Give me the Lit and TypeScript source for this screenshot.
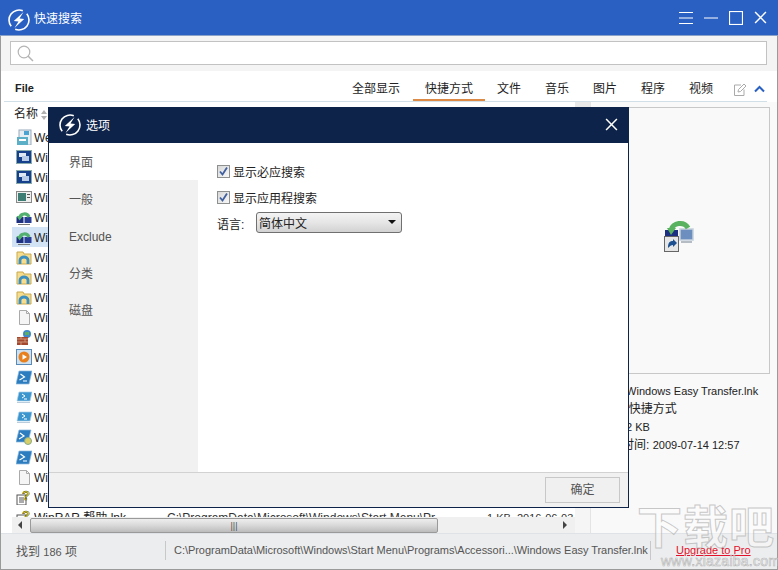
import { LitElement, html, css, svg } from 'lit';
import { customElement } from 'lit/decorators.js';

const bolt = () => html`
  <svg class="logo" width="22" height="22" viewBox="0 0 22 22" fill="none">
    <path d="M14.800 1.800A10 10 0 0 0 3.200 17.300M7.200 20.200A10 10 0 0 0 18.800 4.700" stroke="#fff" stroke-width="1.600"/>
    <path d="M15.500 3 5.800 12 10.500 12.400 6.500 19 16.200 10 11.500 9.600z" fill="#fff"/>
  </svg>`;

const icons: Record<string, unknown> = {
  web: svg`<rect x="3" y="1" width="12" height="15" fill="#e4eef3" stroke="#9ab"/><rect x="1" y="8" width="11" height="8" fill="#5bb0c8"/><rect x="3" y="10" width="7" height="2" fill="#fff"/><rect x="8" y="2" width="5" height="4" fill="#4aa3d0"/>`,
  win: svg`<rect x="0.5" y="1.500" width="15" height="13" fill="#17408c" stroke="#8aa"/><rect x="3" y="4" width="7" height="4" fill="#dfe8f5"/><rect x="6" y="7" width="7" height="5" fill="#b8cbe6"/>`,
  pane: svg`<rect x="0.5" y="2.500" width="15" height="11" fill="#eee" stroke="#888"/><rect x="2" y="4" width="8" height="8" fill="#3e7d74"/><rect x="11" y="5" width="3" height="1" fill="#555"/><rect x="11" y="8" width="3" height="1" fill="#555"/>`,
  net: svg`<rect x="0.5" y="8" width="7" height="6" fill="#1c2f80"/><rect x="8.500" y="8" width="7" height="6" fill="#2a3f96"/><rect x="2" y="15" width="12" height="1" fill="#777"/><path d="M3.500 9A5 5 0 0 1 13 8" fill="none" stroke="#52b070" stroke-width="3.200"/><path d="M0.500 7 7 7 3.500 11.500z" fill="#52b070"/>`,
  folder: svg`<path d="M1 3h6l1 2h7v10H1z" fill="#f6dc8c" stroke="#c9a94e"/><path d="M4 15V11a4 3 0 0 1 8 0v4" fill="none" stroke="#3d8fc0" stroke-width="2.800"/>`,
  doc: svg`<path d="M3.500 1.500h7l3 3v11h-10z" fill="#f5f5f5" stroke="#aaa"/><path d="M10.500 1.500v3h3" fill="none" stroke="#aaa"/>`,
  fire: svg`<circle cx="11" cy="5" r="4" fill="#3f88c9"/><path d="M9 3h4v3H9z" fill="#5fae5a"/><path d="M1 8h11v8H1z" fill="#a4492f"/><path d="M1 10h11M1 13h11M5 8v2M9 10v3M5 13v3" stroke="#d9a58c" stroke-width=".8"/>`,
  play: svg`<rect x="0.500" y="0.500" width="15" height="15" fill="#cfe0ef" stroke="#5a8bb8"/><circle cx="8" cy="8" r="5.500" fill="#e8801e"/><path d="M6.500 5.200 11 8l-4.500 2.800z" fill="#fff"/>`,
  ps: svg`<path d="M3 2h13l-3 13H0z" fill="#2c7cc0" stroke="#8db9dc" stroke-width=".7"/><path d="M4.500 5 8.500 8 3.500 11M7 12h4" fill="none" stroke="#fff" stroke-width="1.200"/>`,
  pssm: svg`<path d="M3 3h13l-2 9H1z" fill="#3b95ce" stroke="#a8cde6" stroke-width=".7"/><path d="M6 5l3 2-3 2M8 10h3" fill="none" stroke="#fff"/><path d="M1 13h13v1H1z" fill="#bcd"/>`,
  psg: svg`<path d="M3 1h12l-3 12H0z" fill="#2c7cc0" stroke="#8db9dc" stroke-width=".7"/><path d="M4 4l4 3-5 3" fill="none" stroke="#fff" stroke-width="1.200"/><circle cx="12" cy="12" r="3.500" fill="#d8cf68" stroke="#8a8"/>`,
  help: svg`<rect x="1" y="6" width="9" height="10" fill="#fff" stroke="#555"/><path d="M3 9h5M3 11h5M3 13h5" stroke="#555"/><text x="6" y="11" font-family="Liberation Sans" font-weight="700" font-size="13" fill="#f4e23a" stroke="#4b4500" stroke-width=".5">?</text>`,
};

const rows = [
  ['web', 'Welcome Center.lnk'], ['win', 'Windows Explorer.lnk'], ['win', 'Windows Defender.lnk'],
  ['pane', 'Windows DVD Maker.lnk'], ['net', 'Windows Easy Transfer Reports.lnk'], ['net', 'Windows Easy Transfer.lnk'],
  ['folder', 'Windows Fax and Scan.lnk'], ['folder', 'Windows Gadget.lnk'], ['folder', 'Windows Journal.lnk'],
  ['doc', 'Windows Live.lnk'], ['fire', 'Windows Firewall.lnk'], ['play', 'Windows Media Player.lnk'],
  ['ps', 'Windows PowerShell.lnk'], ['pssm', 'Windows PowerShell ISE.lnk'], ['pssm', 'Windows PowerShell ISE (x86).lnk'],
  ['psg', 'Windows PowerShell Modules.lnk'], ['ps', 'Windows PowerShell (x86).lnk'], ['doc', 'Windows Update.lnk'],
  ['help', 'WinRAR.lnk'], ['help', 'WinRAR 帮助.lnk'],
];

@customElement('app-root')
export class AppRoot extends LitElement {
  static styles = css`
    :host {
      display: block;
      width: 778px;
      height: 570px;
      position: relative;
      overflow: hidden;
      font-family: "Liberation Sans", "Noto Sans CJK SC", sans-serif;
      font-size: 12px;
      color: #222;
      background: #fff;
    }
    .window {
      height: 570px;
      box-sizing: border-box;
      border: 1px solid #9a9a9a;
      border-top: none;
      display: flex;
      flex-direction: column;
    }
    .titlebar {
      height: 36px;
      flex: none;
      margin: 0 -1px;
      background: #2a60c2;
      border-bottom: 1px solid #8aa2c8;
      box-sizing: border-box;
      display: flex;
      align-items: center;
      padding: 0 11px 0 8px;
      color: #fff;
    }
    .titlebar .logo { margin-top: 4px; flex: none; }
    .titlebar .name { margin-left: 4px; flex: 1; }
    .winbtns { display: flex; gap: 11px; align-items: center; }
    .searchbar {
      height: 35px;
      flex: none;
      background: #f4f4f4;
      box-sizing: border-box;
      padding: 5px 10px 6px 9px;
    }
    .searchbox {
      height: 24px;
      background: #fff;
      border: 1px solid #c2c2c2;
      box-sizing: border-box;
      padding: 3px 6px;
    }
    .tabs {
      height: 31px;
      flex: none;
      margin: 0 10px 0 3px;
      border-bottom: 1px solid #d0dfe8;
      box-sizing: border-box;
      display: flex;
      align-items: center;
      padding-left: 11px;
    }
    .file { font-weight: 700; font-size: 11px; flex: 1; margin-top: 3px; }
    .tab { width: 72px; height: 30px; line-height: 37px; text-align: center; box-sizing: border-box; flex: none; }
    .tab.first { width: 74px; }
    .tab.small { width: 48px; }
    .tab.on { border-bottom: 2px solid #dc8a45; }
    .tabend { display: flex; align-items: center; gap: 7px; margin: 6px 2px 0 9px; }
    .main { flex: 1; display: flex; min-height: 0; }
    .list { width: 589px; flex: none; display: flex; padding-left: 3px; box-sizing: border-box; }
    .listmain { flex: 1; min-width: 0; display: flex; flex-direction: column; }
    .vscroll { width: 15px; flex: none; background: #f5f5f5; }
    .vscroll div { height: 16px; background: #e9e9e9; }
    .rows { flex: 1; overflow: hidden; }
    .head { height: 25px; line-height: 27px; padding-left: 10px; display: flex; align-items: center; gap: 3px; }
    .head svg { margin-top: 1px; }
    .row {
      height: 20px;
      display: flex;
      align-items: center;
      padding-left: 12px;
      white-space: nowrap;
    }
    .row.sel { background: #d3e3f6; margin-left: 8px; padding-left: 4px; }
    .row svg { flex: none; margin-right: 2px; }
    .row span { line-height: 22px; height: 20px; flex: none; overflow: hidden; }
    .row .n { width: 133px; }
    .row .p { width: 320px; color: #333; }
    .row .s { width: 30px; color: #333; font-size: 11px; }
    .row .d { width: 58px; color: #333; font-size: 11px; }
    .hscroll {
      height: 16px;
      flex: none;
      margin-left: 8px;
      background: #f0f0f0;
      display: flex;
      align-items: center;
    }
    .arrow { width: 0; height: 0; border: 4px solid transparent; flex: none; }
    .arrow.l { border-right-color: #444; margin-left: 2px; }
    .arrow.r { border-left-color: #444; margin-left: 125px; }
    .thumb {
      width: 408px;
      height: 15px;
      margin-left: 8px;
      flex: none;
      box-sizing: border-box;
      border: 1px solid #9a9a9a;
      border-radius: 2px;
      background: linear-gradient(#eee, #d8d8d8 50%, #bcbcbc);
      text-align: center;
      font-size: 9px;
      line-height: 14px;
      color: #555;
    }
    .preview { flex: 1; background: #f9f9f9; border-left: 1px solid #e4e4e4; padding-left: 9px; box-sizing: border-box; min-width: 0; }
    .shot {
      height: 267px;
      margin: 5px 7px 0 0;
      border: 1px solid #c8c8c8;
      box-sizing: border-box;
      display: flex;
      justify-content: flex-end;
      padding: 112px 74px 0 0;
    }
    .facts { margin-top: 8px; line-height: 18px; white-space: nowrap; font-size: 11px; margin-left: -2px; }
    .facts .cj { font-size: 12px; }
    .facts .num { font-size: 11px; }
    .status {
      height: 36px;
      flex: none;
      background: #ecedee;
      border-top: 1px solid #dfe3e8;
      box-sizing: border-box;
      display: flex;
      align-items: center;
      color: #555;
      padding: 0 0 2px 15px;
      white-space: nowrap;
    }
    .found { width: 149px; flex: none; }
    .found b { font-weight: 400; font-size: 11px; }
    .path { border-left: 1px solid #c8c8c8; height: 19px; line-height: 19px; padding-left: 8px; width: 476px; flex: none; font-size: 11px; letter-spacing: -0.04px; }
    .pro { border-left: 1px solid #c8c8c8; height: 19px; line-height: 19px; padding-left: 25px; color: #e3122a; text-decoration: underline; font-size: 11px; }

    .modal {
      position: absolute;
      left: 48px;
      top: 107px;
      width: 581px;
      height: 401px;
      box-sizing: border-box;
      border: 1px solid #0e2349;
      border-top: none;
      background: #fff;
      display: flex;
      flex-direction: column;
    }
    .mhead {
      height: 36px;
      flex: none;
      margin: 0 -1px;
      background: #0e2349;
      display: flex;
      align-items: center;
      padding: 0 11px 1px 11px;
      box-sizing: border-box;
      color: #fff;
    }
    .mhead .name { margin-left: 5px; flex: 1; }
    .mbody { flex: 1; display: flex; min-height: 0; }
    .side { width: 149px; flex: none; background: #f1f1f1; display: flex; flex-direction: column; }
    .side div { height: 37px; line-height: 41px; padding-left: 20px; color: #555; flex: none; }
    .side div.on { background: #fff; }
    .pane { flex: 1; padding: 15px 0 0 19px; }
    .check { display: flex; align-items: center; gap: 3px; height: 26px; }
    .box {
      width: 13px;
      height: 13px;
      box-sizing: border-box;
      border: 1px solid #8e8f8f;
      background: linear-gradient(135deg, #d8d8d8, #f7f7f7);
      display: block;
    }
    .box svg { display: block; }
    .lang { display: flex; align-items: center; height: 26px; margin-top: -1px; }
    .lang label { width: 39px; flex: none; margin-top: 3px; }
    .select {
      width: 146px;
      height: 21px;
      box-sizing: border-box;
      border: 1px solid #707070;
      border-radius: 3px;
      background: linear-gradient(#f4f4f4, #e6e6e6 50%, #d2d2d2);
      display: flex;
      align-items: center;
      justify-content: space-between;
      padding: 0 5px 0 2px;
    }
    .caret { width: 0; height: 0; border: 4px solid transparent; border-top-color: #111; border-bottom: none; }
    .mfoot {
      height: 35px;
      flex: none;
      box-sizing: border-box;
      border-top: 1px solid #d2d2d2;
      background: #f1f1f1;
      display: flex;
      justify-content: flex-end;
      align-items: center;
      padding-right: 8px;
    }
    .ok {
      width: 75px;
      height: 26px;
      box-sizing: border-box;
      border: 1px solid #c8c8c8;
      background: #f0f0f0;
      color: #555;
      text-align: center;
      line-height: 24px;
    }
    .mark {
      position: absolute;
      left: 637px;
      top: 503px;
      color: rgba(255, 255, 255, 0.45);
      -webkit-text-stroke: 1px rgba(165, 165, 165, 0.6);
      font-size: 45px;
      line-height: 52px;
      letter-spacing: 1px;
      font-weight: 700;
      white-space: nowrap;
      pointer-events: none;
    }
    .markurl {
      position: absolute;
      left: 661px;
      top: 554px;
      font-size: 14px;
      line-height: 14px;
      letter-spacing: .25px;
      color: rgba(255, 255, 255, 0.6);
      -webkit-text-stroke: .6px rgba(165, 165, 165, 0.8);
      white-space: nowrap;
      pointer-events: none;
    }
  `;

  private icon(name: string) {
    return html`<svg width="16" height="16" viewBox="0 0 16 16">${icons[name]}</svg>`;
  }

  private closeIcon() {
    return html`<svg width="13" height="13" viewBox="0 0 12 12"><path d="M1 1l10 10M11 1 1 11" stroke="#fff" stroke-width="1.400"/></svg>`;
  }

  private tick() {
    return html`<svg width="11" height="11" viewBox="0 0 11 11"><path d="M2 5.500l2.500 3L9 1.500" fill="none" stroke="#3f5f9e" stroke-width="1.800"/></svg>`;
  }

  render() {
    return html`
      <div class="window">
        <div class="titlebar">
          ${bolt()}
          <span class="name">快速搜索</span>
          <div class="winbtns">
            <svg width="14" height="14" viewBox="0 0 14 14"><path d="M0 1.500h14M0 7h14M0 12.500h14" stroke="#fff"/></svg>
            <svg width="14" height="14" viewBox="0 0 14 14"><path d="M0 7h14" stroke="#fff"/></svg>
            <svg width="14" height="14" viewBox="0 0 14 14"><rect x=".5" y=".5" width="13" height="13" fill="none" stroke="#fff" stroke-width="1.200"/></svg>
            ${this.closeIcon()}
          </div>
        </div>
        <div class="searchbar">
          <div class="searchbox">
            <svg width="17" height="17" viewBox="0 0 17 17" fill="none" stroke="#b4b4b4"><circle cx="7" cy="7" r="5.800" stroke-width="1.200"/><path d="M11 11l5 5" stroke-width="1.500"/></svg>
          </div>
        </div>
        <div class="tabs">
          <span class="file">File</span>
          <span class="tab first">全部显示</span>
          <span class="tab on">快捷方式</span>
          <span class="tab small">文件</span>
          <span class="tab small">音乐</span>
          <span class="tab small">图片</span>
          <span class="tab small">程序</span>
          <span class="tab small">视频</span>
          <span class="tabend">
            <svg width="13" height="13" viewBox="0 0 13 13" fill="none" stroke="#aaa"><path d="M10 6.500v6H.5V2H7"/><path d="M4 9l.5-2.500L10 1l2 2-5.500 5.500z"/></svg>
            <svg width="11" height="8" viewBox="0 0 11 8" fill="none" stroke="#2a60c2" stroke-width="2"><path d="M1 6.500l4.500-4.500 4.500 4.500"/></svg>
          </span>
        </div>
        <div class="main">
          <div class="list">
            <div class="listmain">
              <div class="rows">
                <div class="head">
                  名称
                  <svg width="6" height="10" viewBox="0 0 6 10" fill="#b0b0b0"><path d="M3 0l3 4H0zM3 10 0 6h6z"/></svg>
                </div>
                ${rows.map((r, i) => html`
                  <div class="row ${i === 5 ? 'sel' : ''}">
                    ${this.icon(r[0])}
                    <span class="n">${r[1]}</span>
                    <span class="p">C:\\ProgramData\\Microsoft\\Windows\\Start Menu\\Pr</span>
                    <span class="s">1 KB</span>
                    <span class="d">2016-06-03</span>
                  </div>`)}
              </div>
              <div class="hscroll">
                <span class="arrow l"></span>
                <div class="thumb">|||</div>
                <span class="arrow r"></span>
              </div>
            </div>
            <div class="vscroll"><div></div></div>
          </div>
          <div class="preview">
            <div class="shot">
              <svg width="32" height="32" viewBox="0 0 32 32">
                <rect x="2" y="10" width="13" height="10" fill="#1c2f80"/>
                <rect x="17" y="9" width="13" height="11" fill="#6c8fc0" stroke="#c5d0dc" stroke-width="1.500"/>
                <path d="M18 22h11" stroke="#b5bcc4" stroke-width="2"/>
                <path d="M8 10A9 8 0 0 1 25 8" fill="none" stroke="#59b25f" stroke-width="5"/>
                <path d="M4 8h9l-5 7z" fill="#59b25f"/>
                <rect x="1.500" y="16.500" width="14" height="15" fill="#e6e6e6" stroke="#666"/>
                <path d="M5 28c0-6 2-7 5-7v-2l4 4-4 4v-2c-2 0-3 1-5 3z" fill="#1c4f90"/>
              </svg>
            </div>
            <div class="facts">
              <div>名称: Windows Easy Transfer.lnk</div>
              <div class="cj">类型: 快捷方式</div>
              <div>大小: 2 KB</div>
              <div class="cj">修改时间: <span class="num">2009-07-14 12:57</span></div>
            </div>
          </div>
        </div>
        <div class="status">
          <span class="found">找到 <b>186</b> 项</span>
          <span class="path">C:\\ProgramData\\Microsoft\\Windows\\Start Menu\\Programs\\Accessori...\\Windows Easy Transfer.lnk</span>
          <span class="pro">Upgrade to Pro</span>
        </div>
      </div>

      <div class="modal">
        <div class="mhead">
          ${bolt()}
          <span class="name">选项</span>
          ${this.closeIcon()}
        </div>
        <div class="mbody">
          <div class="side">
            <div class="on">界面</div>
            <div>一般</div>
            <div>Exclude</div>
            <div>分类</div>
            <div>磁盘</div>
          </div>
          <div class="pane">
            <div class="check"><span class="box">${this.tick()}</span>显示必应搜索</div>
            <div class="check"><span class="box">${this.tick()}</span>显示应用程搜索</div>
            <div class="lang"><label>语言:</label><div class="select">简体中文<span class="caret"></span></div></div>
          </div>
        </div>
        <div class="mfoot"><div class="ok">确定</div></div>
      </div>

      <div class="mark">下载吧</div>
      <div class="markurl">www.xiazaiba.com</div>
    `;
  }
}
